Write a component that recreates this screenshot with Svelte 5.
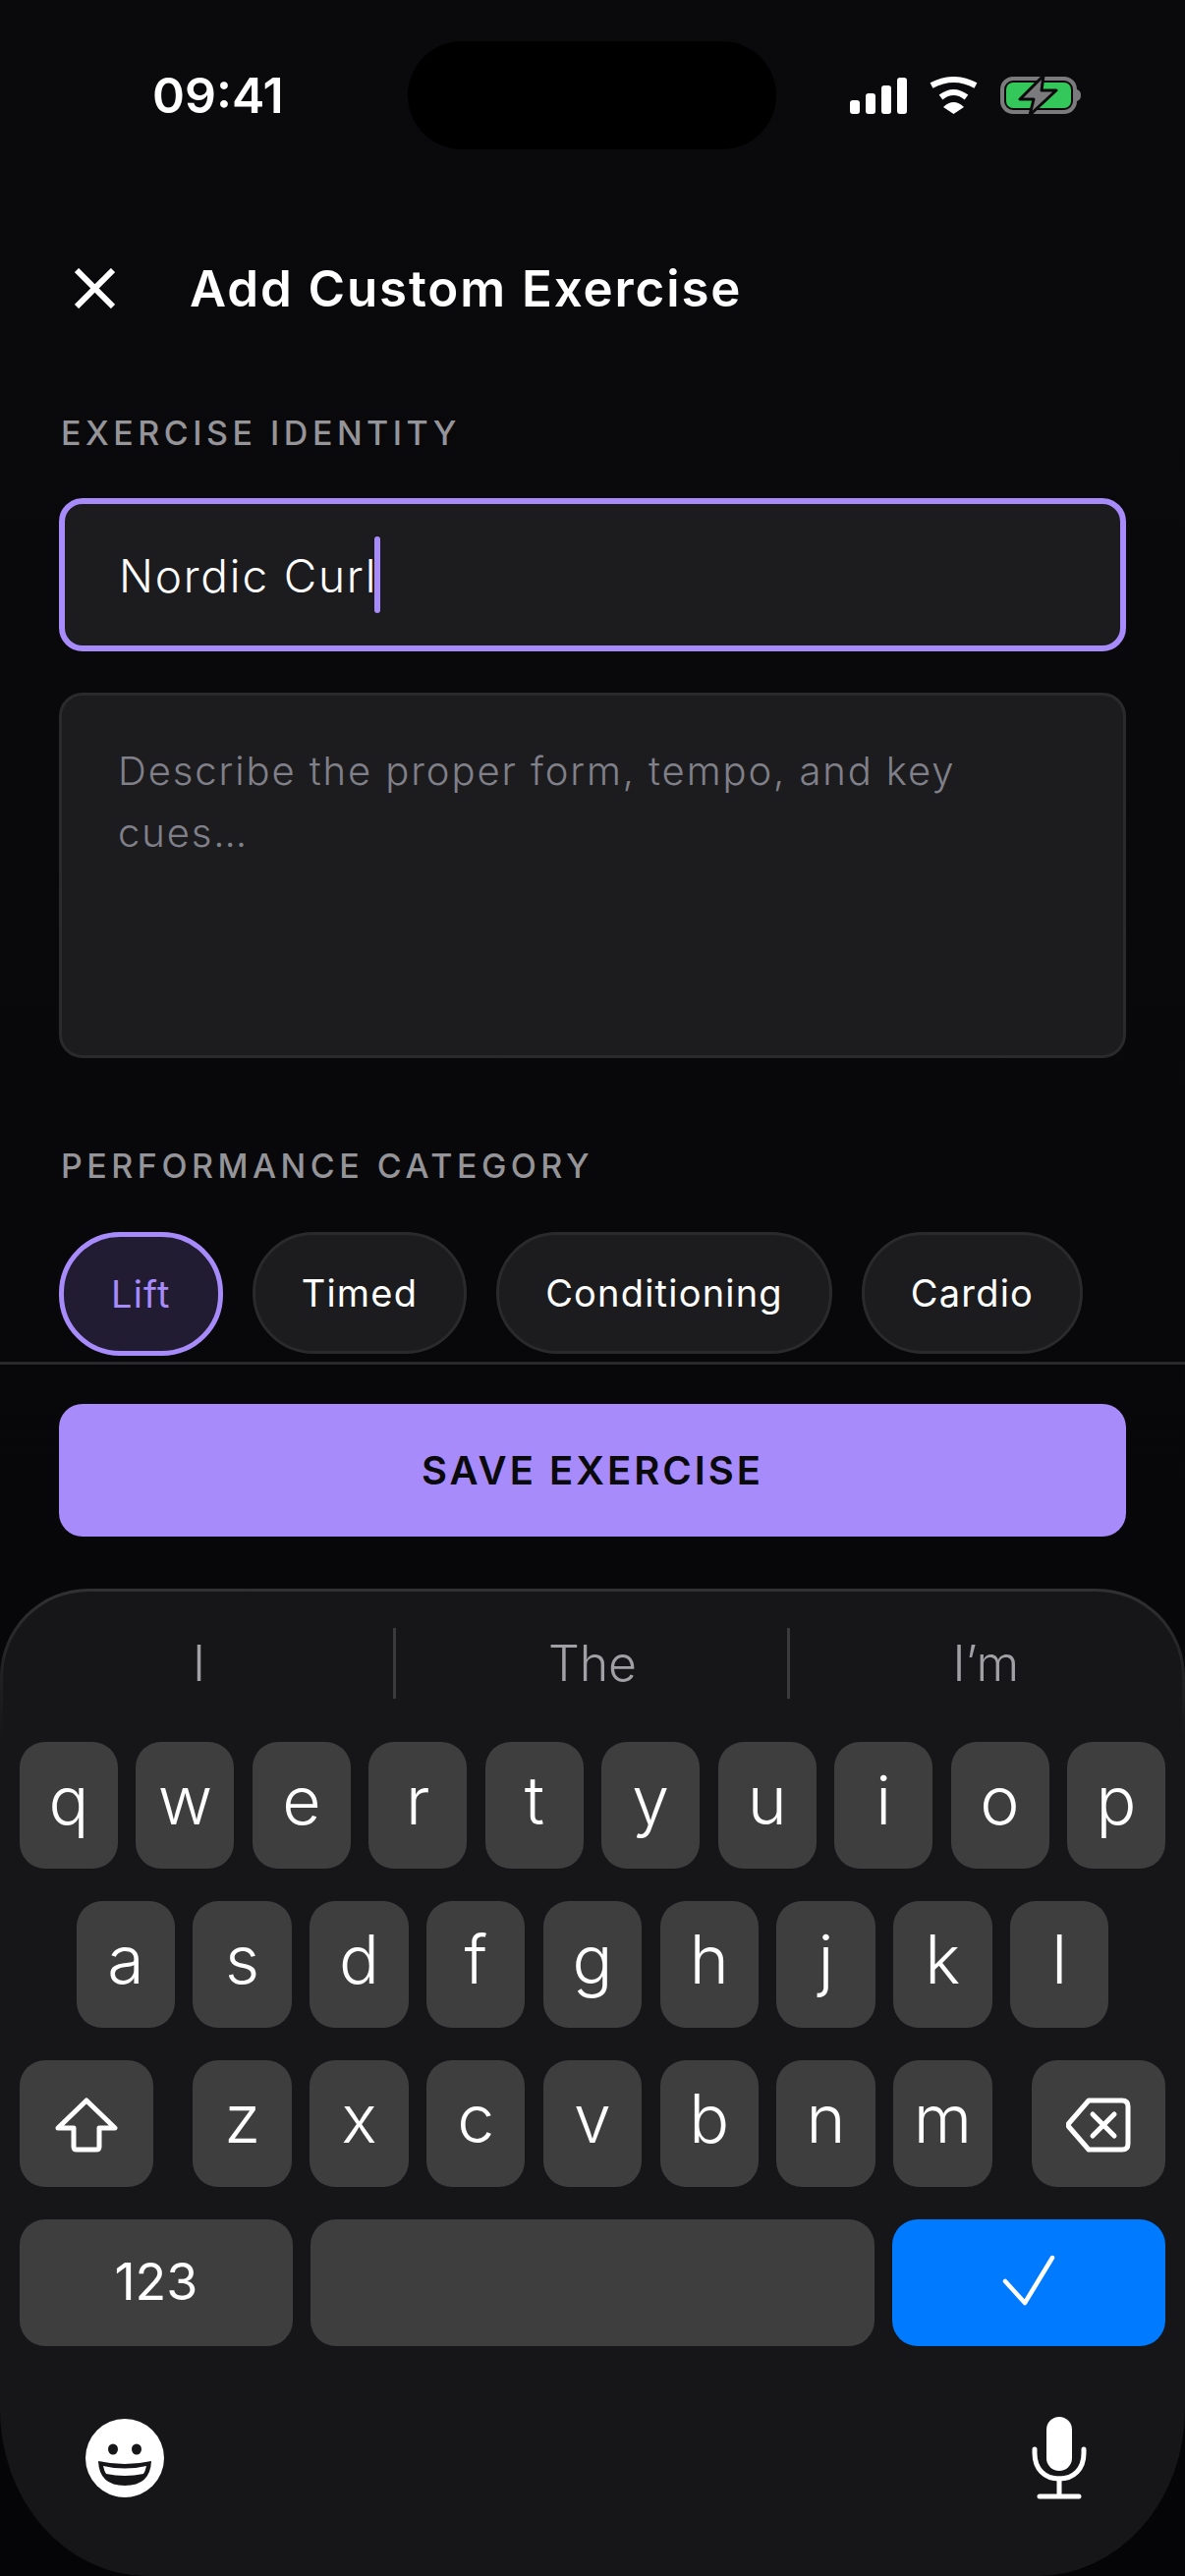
<script>
	const categories = [
		{ label: 'Lift', selected: true },
		{ label: 'Timed' },
		{ label: 'Conditioning' },
		{ label: 'Cardio' }
	];
	const suggestions = ['I', 'The', 'I’m'];
	const rowOne = 'qwertyuiop'.split('');
	const rowTwo = 'asdfghjkl'.split('');
	const rowThree = 'zxcvbnm'.split('');
</script>

<div class="screen">
	<div class="status">
		<span class="time">09:41</span>
		<div class="island"></div>
		<div class="status-icons">
			<svg width="58" height="37" viewBox="0 0 58 37" fill="#fff">
				<rect x="0" y="23" width="10" height="14" rx="3" />
				<rect x="16" y="16" width="10" height="21" rx="3" />
				<rect x="32" y="8" width="10" height="29" rx="3" />
				<rect x="48" y="0" width="10" height="37" rx="3" />
			</svg>
			<svg class="wifi" width="51" height="38" viewBox="0 0 51 38">
				<path d="M3 9 Q25.5 -3 48 9" fill="none" stroke="#fff" stroke-width="6" />
				<path d="M12.500 21 Q25.500 11 38.500 21" fill="none" stroke="#fff" stroke-width="6" />
				<path d="M15 31 Q25.500 21 36 31 L25.500 38 Z" fill="#fff" />
			</svg>
			<svg class="battery" width="82" height="42" viewBox="0 0 82 42">
				<rect x="2" y="4" width="74" height="34" rx="11" fill="none" stroke="#7b7b7d" stroke-width="4" />
				<rect x="6" y="8" width="66" height="26" rx="7" fill="#34c759" />
				<path d="M78 15 C81 16 82 18 82 21 C82 24 81 26 78 27 Z" fill="#7b7b7d" />
				<path d="M44 1 L20 25 H34 L30 41 L57 16 H42 Z" fill="#7b7b7d" stroke="#0a0a0d" stroke-width="3" stroke-linejoin="round" />
			</svg>
		</div>
	</div>

	<header class="topbar">
		<svg class="close" width="41" height="41" viewBox="0 0 41 41">
			<path d="M2 2 L39 39 M39 2 L2 39" fill="none" stroke="#fff" stroke-width="6" />
		</svg>
		<h1>Add Custom Exercise</h1>
	</header>

	<main class="form">
		<div class="label">EXERCISE IDENTITY</div>
		<div class="field name">Nordic Curl<span class="caret"></span></div>
		<div class="field notes">Describe the proper form, tempo, and key cues…</div>

		<div class="label category">PERFORMANCE CATEGORY</div>
		<div class="chips">
			{#each categories as c}
				<div class="chip" class:selected={c.selected}>{c.label}</div>
			{/each}
		</div>
	</main>

	<footer class="actions">
		<button class="save">SAVE EXERCISE</button>
	</footer>

	<section class="keyboard">
		<div class="suggestions">
			{#each suggestions as s}
				<div class="suggestion">{s}</div>
			{/each}
		</div>

		<div class="row">
			{#each rowOne as k}
				<div class="key">{k}</div>
			{/each}
		</div>
		<div class="row">
			{#each rowTwo as k}
				<div class="key">{k}</div>
			{/each}
		</div>
		<div class="row">
			<div class="key wide left">
				<svg width="64" height="56" viewBox="0 0 64 56">
					<path d="M32 3 L61 31 H45 V50 Q45 53 42 53 H22 Q19 53 19 50 V31 H3 Z" fill="none" stroke="#fff" stroke-width="5" stroke-linejoin="round" />
				</svg>
			</div>
			{#each rowThree as k}
				<div class="key">{k}</div>
			{/each}
			<div class="key wide right">
				<svg width="66" height="56" viewBox="0 0 66 56">
					<path d="M23 3 H57 Q63 3 63 9 V47 Q63 53 57 53 H23 L3 30 Q1 28 3 26 Z" fill="none" stroke="#fff" stroke-width="5" stroke-linejoin="round" />
					<path d="M27 17 L49 39 M49 17 L27 39" fill="none" stroke="#fff" stroke-width="5" stroke-linecap="round" />
				</svg>
			</div>
		</div>
		<div class="row">
			<div class="key numbers">123</div>
			<div class="key space"></div>
			<div class="key done">
				<svg width="54" height="52" viewBox="0 0 54 52">
					<path d="M3 27 L23 49 L51 3" fill="none" stroke="#fff" stroke-width="4.500" stroke-linecap="round" stroke-linejoin="round" />
				</svg>
			</div>
		</div>

		<div class="kb-bottom">
			<svg width="80" height="80" viewBox="0 0 80 80">
				<circle cx="40" cy="40" r="40" fill="#fff" />
				<ellipse cx="28" cy="31" rx="5" ry="5.500" fill="#161618" />
				<ellipse cx="52" cy="31" rx="5" ry="5.500" fill="#161618" />
				<path d="M13 43 Q40 49 67 43 Q66 68 40 68 Q14 68 13 43 Z" fill="#161618" />
				<path d="M18 48 Q40 53 62 48 Q61 53 59 56 Q40 60 21 56 Q19 53 18 48 Z" fill="#fff" />
			</svg>
			<svg width="56" height="84" viewBox="0 0 56 84">
				<rect x="15" y="0" width="26" height="55" rx="13" fill="#fff" />
				<path d="M3 33 V37 C3 53 13 63 28 63 C43 63 53 53 53 37 V33" fill="none" stroke="#fff" stroke-width="5" stroke-linecap="round" />
				<path d="M28 63 V81 M8 81 H48" fill="none" stroke="#fff" stroke-width="5" stroke-linecap="round" />
			</svg>
		</div>
	</section>
</div>

<style>
	:global(body) {
		margin: 0;
		background: #08080a;
	}

	.screen {
		width: 1206px;
		height: 2622px;
		overflow: hidden;
		display: flex;
		flex-direction: column;
		background: linear-gradient(#0a0a0d 0%, #08080a 50%, #050507 100%);
		color: #fff;
		font-family: Inter, 'Noto Sans', sans-serif;
	}

	.status {
		height: 194px;
		flex-shrink: 0;
		box-sizing: border-box;
		padding: 42px 0 0 155px;
		display: flex;
		align-items: flex-start;
	}

	.time {
		width: 260px;
		height: 110px;
		line-height: 110px;
		font-size: 50px;
		font-weight: 600;
	}

	.island {
		width: 375px;
		height: 110px;
		border-radius: 55px;
		background: #000;
	}

	.status-icons {
		margin-left: 75px;
		height: 110px;
		display: flex;
		align-items: center;
	}

	.wifi {
		margin-left: 22px;
	}

	.battery {
		margin-left: 22px;
	}

	.topbar {
		height: 200px;
		flex-shrink: 0;
		box-sizing: border-box;
		padding: 0 0 0 76px;
		display: flex;
		align-items: flex-start;
	}

	.close {
		margin-top: 79px;
	}

	.topbar h1 {
		margin: 61px 0 0 76px;
		font-size: 51px;
		line-height: 78px;
		font-weight: 600;
		letter-spacing: 1.9px;
	}

	.form {
		height: 992px;
		flex-shrink: 0;
		box-sizing: border-box;
		padding: 27px 60px 0;
	}

	.label {
		margin-left: 2px;
		height: 40px;
		line-height: 40px;
		font-size: 34px;
		font-weight: 500;
		letter-spacing: 4.5px;
		color: #949499;
	}

	.label.category {
		margin-top: 90px;
	}

	.field {
		box-sizing: border-box;
		background: #1c1c1e;
		border: 3px solid #2a2a2d;
		border-radius: 24px;
	}

	.name {
		height: 156px;
		margin-top: 46px;
		padding: 2px 0 0 55px;
		border: 6px solid #a78bfa;
		display: flex;
		align-items: center;
		font-size: 46px;
		font-weight: 350;
		letter-spacing: 1.8px;
		color: #fff;
	}

	.caret {
		width: 6px;
		height: 78px;
		margin: -2px 0 0 -3px;
		border-radius: 3px;
		background: #a78bfa;
	}

	.notes {
		height: 372px;
		margin-top: 42px;
		padding: 45px 60px 0 57px;
		font-size: 40px;
		font-weight: 350;
		line-height: 63px;
		letter-spacing: 1.9px;
		color: #80808a;
	}

	.chips {
		display: flex;
		align-items: flex-start;
		gap: 30px;
		margin-top: 47px;
	}

	.chip {
		box-sizing: border-box;
		height: 124px;
		padding: 0 47px;
		border-radius: 62px;
		background: #1c1c1e;
		border: 3px solid #2a2a2d;
		display: flex;
		align-items: center;
		font-size: 38px;
		font-weight: 400;
		letter-spacing: 1.2px;
	}

	.chip.selected {
		height: 126px;
		padding: 0 48px;
		background: #221c33;
		border: 5px solid #a78bfa;
		color: #a78bfa;
	}

	.actions {
		flex-shrink: 0;
		height: 231px;
		box-sizing: border-box;
		border-top: 3px solid #29292b;
		padding: 40px 60px 0;
	}

	.save {
		display: block;
		width: 100%;
		height: 135px;
		border: none;
		border-radius: 24px;
		background: #a78bfa;
		color: #0a0a0d;
		font-family: inherit;
		font-size: 40px;
		font-weight: 600;
		letter-spacing: 3px;
	}

	.keyboard {
		flex: 1;
		box-sizing: border-box;
		background:
			linear-gradient(#161618, #161618) padding-box,
			linear-gradient(#313133, #161618 15%) border-box;
		border: 3px solid transparent;
		border-bottom: none;
		border-radius: 90px 90px 150px 150px / 90px 90px 170px 170px;
		padding: 0 17px;
		display: flex;
		flex-direction: column;
		gap: 33px;
	}

	.suggestions {
		height: 121px;
		margin: 0 -17px;
		padding-top: 37px;
		box-sizing: border-box;
		display: flex;
		margin-bottom: -1px;
	}

	.suggestion {
		flex: 1;
		height: 72px;
		display: flex;
		align-items: center;
		justify-content: center;
		font-size: 50px;
		font-weight: 350;
		color: #a0a0a5;
		border-left: 3px solid #3a3a3c;
		margin-left: -2px;
	}

	.suggestion:first-child {
		border-left: none;
		margin-left: 0;
	}

	.row {
		display: flex;
		justify-content: center;
		gap: 18.4px;
		height: 129px;
		flex-shrink: 0;
	}

	.key {
		box-sizing: border-box;
		width: 100.400px;
		padding-bottom: 12px;
		border-radius: 26px;
		background: #3e3e3f;
		display: flex;
		align-items: center;
		justify-content: center;
		font-size: 68px;
		font-weight: 350;
		color: #fff;
	}

	.key.wide {
		width: 136px;
		padding: 3px 0 0;
	}

	.key.left {
		margin-right: 22px;
	}

	.key.right {
		margin-left: 22px;
	}

	.key.numbers {
		width: 278px;
		padding-bottom: 2px;
		font-size: 52px;
		font-weight: 400;
	}

	.key.space {
		width: 574px;
	}

	.key.done {
		width: 278px;
		padding-bottom: 6px;
		background: #007aff;
	}

	.kb-bottom {
		display: flex;
		justify-content: space-between;
		align-items: center;
		padding: 39px 80px 0 67px;
	}
</style>
